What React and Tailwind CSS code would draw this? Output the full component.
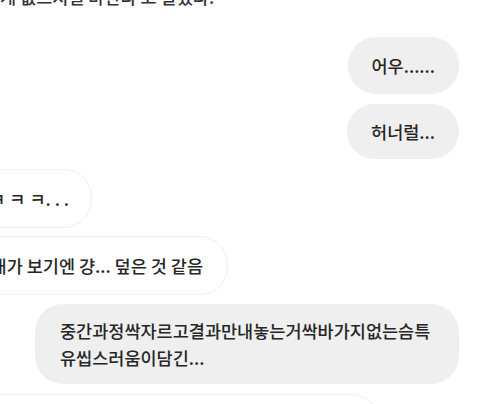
import React from "react";

const font = { fontFamily: '"Noto Sans CJK KR", "Noto Sans", sans-serif' };

function RightBubble({ children, className = "" }) {
  return (
    <div className="flex justify-end pr-[21px]">
      <div className={`rounded-[28px] bg-[#efefef] px-6 text-[17.5px] font-medium leading-[27px] text-[#262626] ${className}`}>
        {children}
      </div>
    </div>
  );
}

function LeftBubble({ children, right, className = "" }) {
  return (
    <div className={`flex justify-end ${right}`}>
      <div className={`shrink-0 whitespace-nowrap rounded-[28px] border border-[#efefef] bg-white px-6 text-[17.5px] font-medium leading-[27px] text-[#262626] ${className}`}>
        {children}
      </div>
    </div>
  );
}

export default function App() {
  return (
    <div className="h-[404px] w-[480px] overflow-hidden bg-white" style={font}>
      <div className="flex flex-col">
        <div className="mt-[-15px] whitespace-nowrap text-[17.5px] font-medium leading-[24px] text-[#333]">
          게 없으시길 바란다 고 말했다.
        </div>
        <div className="mt-[28px]">
          <RightBubble className="py-[15px]">어우......</RightBubble>
        </div>
        <div className="mt-[10px]">
          <RightBubble className="py-[14px]">허너럴...</RightBubble>
        </div>
        <div className="mt-[10px]">
          <LeftBubble right="w-[92px]" className="py-[15px] pr-[22px]">ㅋ ㅋ ㅋ ㅋ. . .</LeftBubble>
        </div>
        <div className="mt-[8px]">
          <LeftBubble right="w-[228px]" className="py-[15px]">내가 보기엔 걍... 덮은 것 같음</LeftBubble>
        </div>
        <div className="mt-[9px] flex justify-end pr-[21px]">
          <div className="w-[424px] rounded-[28px] bg-[#efefef] py-[13px] pl-[25px] pr-3 text-[17.5px] font-medium leading-[27px] text-[#262626]">
            중간과정싹자르고결과만내놓는거싹바가지없는슴특
            <br />
            유씹스러움이담긴...
          </div>
        </div>
        <div className="mt-[10px]">
          <LeftBubble right="w-[380px]" className="h-[57px] w-[420px]"> </LeftBubble>
        </div>
      </div>
    </div>
  );
}
